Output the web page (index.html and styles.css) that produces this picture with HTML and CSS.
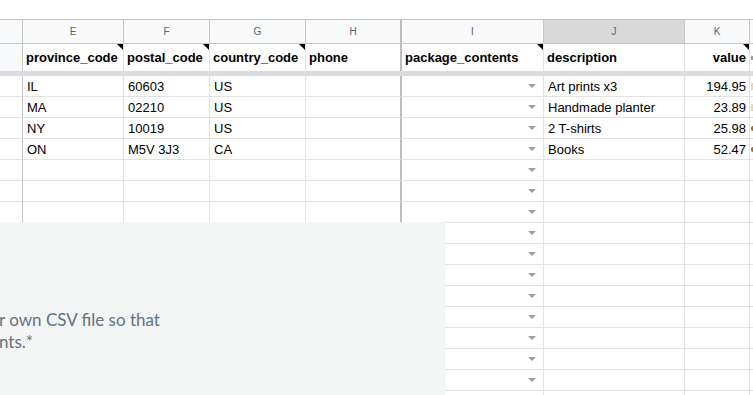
FILE: index.html
```html
<!DOCTYPE html>
<html>

<head>
    <link rel="stylesheet" href="styles.css">
</head>

<body>
    <div class="sheet">
        <div class="top-space"></div>

        <div class="grid" id="grid">
            <!-- Column letters -->
            <div class="col-head"></div>
            <div class="col-head">E</div>
            <div class="col-head">F</div>
            <div class="col-head">G</div>
            <div class="col-head frozen">H</div>
            <div class="col-head">I</div>
            <div class="col-head selected">J</div>
            <div class="col-head">K</div>
            <div class="col-head last"></div>

            <!-- Header row -->
            <div class="label-cell blank"></div>
            <div class="label-cell note">province_code</div>
            <div class="label-cell note">postal_code</div>
            <div class="label-cell note">country_code</div>
            <div class="label-cell frozen">phone</div>
            <div class="label-cell note">package_contents</div>
            <div class="label-cell">description</div>
            <div class="label-cell note num">value</div>
            <div class="label-cell last"><span class="mark gray"></span></div>

            <div class="freeze-bar"></div>
        </div>

        <aside class="panel">
            <p>r own CSV file so that<br>nts.*</p>
        </aside>
    </div>

    <script>
        const rows = [
            ['IL', '60603', 'US', '', 'Art prints x3', '194.95', 'light'],
            ['MA', '02210', 'US', '', 'Handmade planter', '23.89', 'light'],
            ['NY', '10019', 'US', '', '2 T-shirts', '25.98', 'dark'],
            ['ON', 'M5V 3J3', 'CA', '', 'Books', '52.47', 'dark']
        ];
        const totalRows = 16;
        const grid = document.getElementById('grid');

        function cell(text, cls) {
            const div = document.createElement('div');
            div.className = 'cell' + (cls ? ' ' + cls : '');
            div.textContent = text;
            grid.appendChild(div);
            return div;
        }

        for (let i = 0; i < totalRows; i++) {
            const r = rows[i] || ['', '', '', '', '', '', ''];
            cell('', 'blank');
            cell(r[0]);
            cell(r[1]);
            cell(r[2]);
            cell(r[3], 'frozen');
            cell('', 'dropdown');
            cell(r[4]);
            cell(r[5], 'num');
            const last = cell('', 'last');
            // only the first pixels of column L show
            if (r[6]) {
                const mark = document.createElement('span');
                mark.className = 'mark ' + r[6];
                last.appendChild(mark);
            }
        }
    </script>
</body>

</html>
```

FILE: styles.css
```css
body {
    margin: 0;
    background: #fff;
    font-family: 'Liberation Sans', Arial, sans-serif;
    overflow: hidden;
}

.sheet {
    position: relative;
    width: 753px;
    height: 395px;
    overflow: hidden;
}

.top-space {
    height: 19px;
}

.grid {
    display: grid;
    grid-template-columns: 23px 101px 86px 96px 96px 142px 141px 65px 1fr;
}

.col-head {
    height: 25px;
    box-sizing: border-box;
    border-top: 1px solid #c4c7c5;
    border-bottom: 1px solid #c4c7c5;
    border-right: 1px solid #c4c7c5;
    background: #f8f9fa;
    color: #5f6368;
    font-size: 10px;
    display: flex;
    align-items: center;
    justify-content: center;
}

.col-head.selected {
    background: #d9d9d9;
}

.label-cell {
    position: relative;
    height: 27px;
    box-sizing: border-box;
    border-right: 1px solid #e2e2e2;
    padding: 0 3px;
    font-size: 13px;
    font-weight: bold;
    color: #000;
    display: flex;
    align-items: center;
    white-space: nowrap;
    overflow: hidden;
}

.label-cell.blank {
    background: #f8f9fa;
    border-right-color: #c4c7c5;
}

.label-cell.num {
    justify-content: flex-end;
}

.note::after {
    content: '';
    position: absolute;
    top: 0;
    right: 0;
    border-top: 6px solid #000;
    border-left: 6px solid transparent;
}

.freeze-bar {
    grid-column: 1 / -1;
    height: 5px;
    background: #dadce0;
}

.cell {
    height: 21px;
    box-sizing: border-box;
    border-right: 1px solid #e2e2e2;
    border-bottom: 1px solid #e2e2e2;
    padding: 0 3px 0 4px;
    font-size: 13px;
    color: #000;
    display: flex;
    align-items: center;
    white-space: nowrap;
    overflow: hidden;
}

.cell.num {
    justify-content: flex-end;
    padding-right: 3px;
}

.cell.blank {
    border-right-color: #c4c7c5;
}

.frozen {
    border-right: 2px solid #bdbdbd !important;
}

.cell.dropdown {
    justify-content: flex-end;
    padding-right: 7px;
}

.cell.dropdown::after {
    content: '';
    border-left: 4px solid transparent;
    border-right: 4px solid transparent;
    border-top: 4px solid #9e9e9e;
}

.last {
    border-right: none;
    padding: 0 0 0 1px;
}

.mark {
    display: block;
    width: 2px;
    height: 7px;
}

.mark.gray {
    height: 4px;
    background: #9e9e9e;
}

.mark.light {
    background: #f1d3b3;
}

.mark.dark {
    width: 3px;
    height: 5px;
    border-radius: 2px 0 0 2px;
    background: #b4651c;
}

.panel {
    position: absolute;
    left: 0;
    top: 222px;
    width: 445px;
    bottom: 0;
    background: #f4f5f5;
}

.panel p {
    margin: 87px 0 0 -1px;
    font-family: Lato, 'Open Sans', sans-serif;
    font-size: 17px;
    line-height: 22px;
    color: #637381;
}
```
